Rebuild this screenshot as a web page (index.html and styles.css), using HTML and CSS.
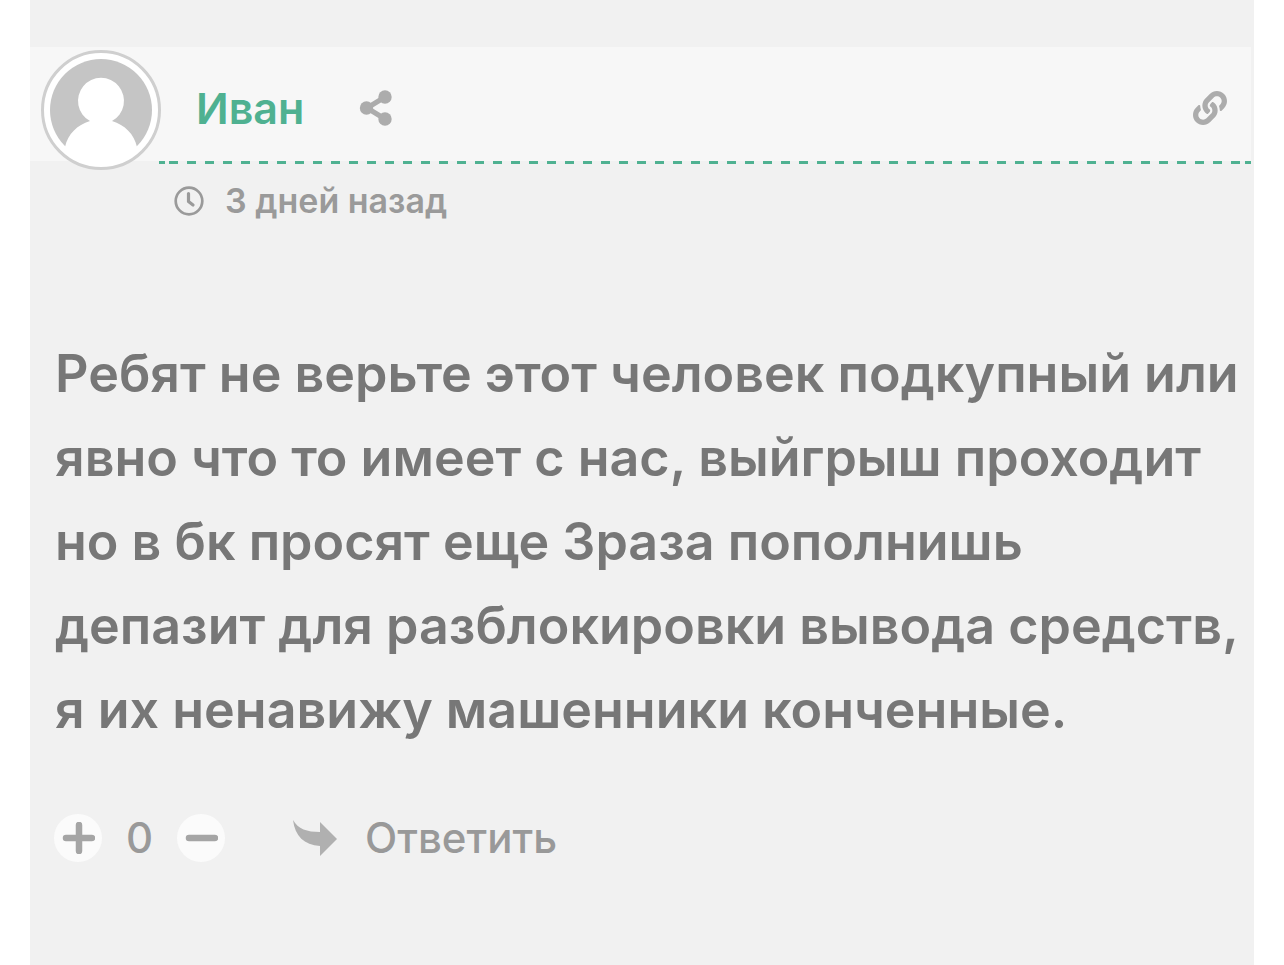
FILE: index.html
```html
<!DOCTYPE html>
<html lang="ru">
<head>
  <meta charset="UTF-8">
  <meta name="viewport" content="width=device-width, initial-scale=1.0">
  <title>Комментарий</title>
  <link rel="stylesheet" href="styles.css">
</head>
<body>
  <article class="comment">
    <header class="comment-header">
      <svg class="avatar" viewBox="0 0 120 120" aria-hidden="true">
        <circle cx="60" cy="60" r="58.5" fill="#fff" stroke="#cfcfcf" stroke-width="3"/>
        <circle cx="60" cy="60" r="51" fill="#c5c5c5"/>
        <path d="M49 71A23 23 0 1 1 71 71C84 75 93 84 96 97C88 108 76 115 60 115C44 115 32 108 24 97C27 84 36 75 49 71Z" fill="#fff"/>
      </svg>
      <div class="comment-bar">
        <a class="author" href="#">Иван</a>
        <button class="icon-button" type="button" aria-label="Поделиться">
          <svg width="34" height="38" viewBox="0 0 34 38">
            <path d="M26 8L8 19L26 30" fill="none" stroke="#acacac" stroke-width="5"/>
            <circle cx="26" cy="8" r="6.7" fill="#acacac"/>
            <circle cx="7.5" cy="19" r="6.7" fill="#acacac"/>
            <circle cx="26" cy="30" r="6.7" fill="#acacac"/>
          </svg>
        </button>
        <a class="permalink" href="#" aria-label="Ссылка на комментарий">
          <svg width="34" height="34" viewBox="0 0 512 512">
            <path fill="#acacac" d="M326.612 185.391c59.747 59.809 58.927 155.698.36 214.590-.11.120-.240.250-.360.370l-67.200 67.200c-59.270 59.270-155.699 59.262-214.960 0-59.270-59.260-59.270-155.700 0-214.960l37.106-37.106c9.840-9.840 26.786-3.300 27.294 10.606.648 17.722 3.826 35.527 9.690 52.721 1.986 5.822.567 12.262-3.783 16.612l-13.087 13.087c-28.026 28.026-28.905 73.660-1.155 101.960 28.024 28.579 74.086 28.749 102.325.510l67.200-67.190c28.191-28.191 28.073-73.757 0-101.830-3.701-3.694-7.429-6.564-10.341-8.569a16.037 16.037 0 0 1-6.947-12.606c-.396-10.567 3.348-21.456 11.698-29.806l21.054-21.055c5.521-5.521 14.182-6.199 20.584-1.731a152.482 152.482 0 0 1 20.522 17.197zM467.547 44.449c-59.261-59.262-155.690-59.270-214.960 0l-67.200 67.200c-.120.120-.250.250-.360.370-58.566 58.892-59.387 154.781.360 214.590a152.454 152.454 0 0 0 20.521 17.196c6.402 4.468 15.064 3.789 20.584-1.731l21.054-21.055c8.350-8.350 12.094-19.239 11.698-29.806a16.037 16.037 0 0 0-6.947-12.606c-2.912-2.005-6.640-4.875-10.341-8.569-28.073-28.073-28.191-73.639 0-101.830l67.200-67.190c28.239-28.239 74.300-28.069 102.325.510 27.750 28.300 26.872 73.934-1.155 101.960l-13.087 13.087c-4.350 4.350-5.769 10.790-3.783 16.612 5.864 17.194 9.042 34.999 9.690 52.721.509 13.906 17.454 20.446 27.294 10.606l37.106-37.106c59.271-59.259 59.271-155.699.001-214.959z"/>
          </svg>
        </a>
      </div>
    </header>
    <div class="comment-date">
      <svg width="30" height="30" viewBox="0 0 30 30" fill="none" stroke="#9a9a9a" aria-hidden="true">
        <circle cx="15" cy="15" r="13.3" stroke-width="2.7"/>
        <path d="M14.5 7.5V15.5L19 19" stroke-width="3.2" stroke-linecap="round" stroke-linejoin="round"/>
      </svg>
      <time>3 дней назад</time>
    </div>
    <p class="comment-text">Ребят не верьте этот человек подкупный или<br>
      явно что то имеет с нас, выйгрыш проходит<br>
      но в бк просят еще 3раза пополнишь<br>
      депазит для разблокировки вывода средств,<br>
      я их ненавижу машенники конченные.</p>
    <footer class="comment-footer">
      <div class="votes">
        <button class="vote" type="button" aria-label="Нравится">
          <svg width="34" height="32" viewBox="0 0 34 32">
            <path d="M18 3V29M5 16H31" stroke="#a5a5a5" stroke-width="6.5" stroke-linecap="round"/>
          </svg>
        </button>
        <span class="vote-count">0</span>
        <button class="vote" type="button" aria-label="Не нравится">
          <svg width="34" height="32" viewBox="0 0 34 32">
            <path d="M5 16H31" stroke="#a5a5a5" stroke-width="6.5" stroke-linecap="round"/>
          </svg>
        </button>
      </div>
      <button class="reply" type="button">
        <svg width="46" height="38" viewBox="0 0 46 38" aria-hidden="true">
          <path d="M1 1C6 10 15 13 28 13V3L45 20L28 37V27C12 26 3 17 1 1Z" fill="#b0b0b0"/>
        </svg>
        Ответить
      </button>
    </footer>
  </article>
</body>
</html>
```

FILE: styles.css
```css
* {
  box-sizing: border-box;
}
body {
  margin: 0;
  background-color: #fff;
  color: #777;
  font-family: Inter, "Noto Sans", sans-serif;
  font-weight: 600;
}
button {
  padding: 0;
  border: none;
  background: none;
  color: inherit;
  font: inherit;
  cursor: pointer;
}
a {
  text-decoration: none;
}
svg {
  display: block;
}
.comment {
  min-height: 100vh;
  margin: 0 30px;
  padding-top: 47px;
  background-color: #f1f1f1;
}
.comment-header {
  display: flex;
  height: 117px;
  margin-right: 3px;
  padding-left: 11px;
  background: linear-gradient(#f7f7f7, #f7f7f7) top / 100% 114px no-repeat;
}
.avatar {
  flex: none;
  width: 120px;
  height: 120px;
  margin: 3px -2px 0 0;
}
.comment-bar {
  display: flex;
  flex: 1;
  align-items: center;
  padding: 4px 24px 0 37px;
  /* dashed line under the author, with short dashes at both ends */
  background:
    linear-gradient(#4fb191, #4fb191) left bottom / 6px 3px no-repeat,
    linear-gradient(#4fb191, #4fb191) right bottom / 6px 3px no-repeat,
    linear-gradient(90deg, #4fb191 9px, transparent 9px) 10px bottom / 18px 3px repeat-x;
}
.author {
  color: #4fb191;
  font-size: 43px;
}
.icon-button {
  margin-left: 55px;
}
.permalink {
  margin-left: auto;
}
.comment-date {
  display: flex;
  align-items: center;
  gap: 21px;
  margin-top: 16px;
  padding-left: 144px;
  color: #9a9a9a;
  font-size: 34px;
  line-height: 42px;
}
.comment-text {
  margin: 110px 0 0;
  padding-left: 25px;
  font-size: 52px;
  line-height: 84px;
}
.comment-footer {
  display: flex;
  align-items: center;
  gap: 67px;
  padding: 61px 24px;
  color: #999;
  font-size: 42px;
  font-weight: 500;
  line-height: 50px;
}
.votes {
  display: flex;
  align-items: center;
}
.vote {
  display: grid;
  place-items: center;
  width: 48px;
  height: 48px;
  border-radius: 50%;
  background-color: #fbfbfb;
}
.vote-count {
  width: 75px;
  text-align: center;
}
.reply {
  display: flex;
  align-items: center;
  gap: 27px;
}
```
